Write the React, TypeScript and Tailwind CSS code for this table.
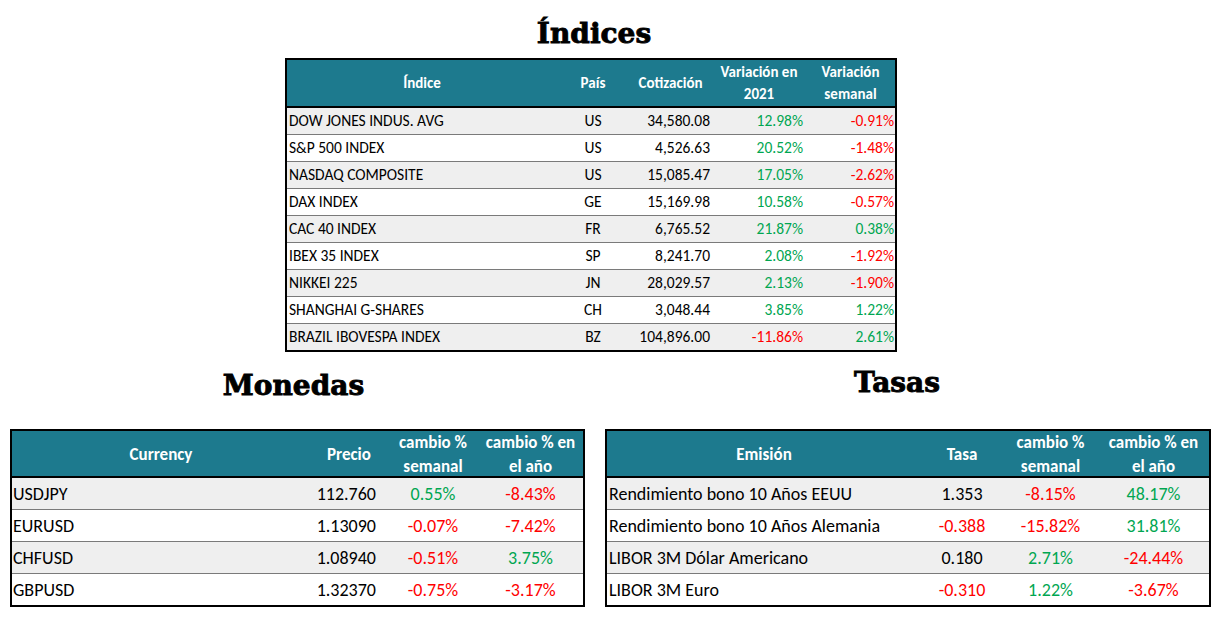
import React from "react"

const GREEN = "text-[#00a651]"
const RED = "text-[#ff0000]"

const body = { fontFamily: "Carlito, Lato, 'Open Sans', sans-serif" }
const titleFont = { fontFamily: "'DejaVu Serif', 'Liberation Serif', serif" }

type Cell = { v: string; c?: "g" | "r" }

const tone = (c?: "g" | "r") => (c === "g" ? GREEN : c === "r" ? RED : "text-black")

const indices: [string, string, string, Cell, Cell][] = [
  ["DOW JONES INDUS. AVG", "US", "34,580.08", { v: "12.98%", c: "g" }, { v: "-0.91%", c: "r" }],
  ["S&P 500 INDEX", "US", "4,526.63", { v: "20.52%", c: "g" }, { v: "-1.48%", c: "r" }],
  ["NASDAQ COMPOSITE", "US", "15,085.47", { v: "17.05%", c: "g" }, { v: "-2.62%", c: "r" }],
  ["DAX INDEX", "GE", "15,169.98", { v: "10.58%", c: "g" }, { v: "-0.57%", c: "r" }],
  ["CAC 40 INDEX", "FR", "6,765.52", { v: "21.87%", c: "g" }, { v: "0.38%", c: "g" }],
  ["IBEX 35 INDEX", "SP", "8,241.70", { v: "2.08%", c: "g" }, { v: "-1.92%", c: "r" }],
  ["NIKKEI 225", "JN", "28,029.57", { v: "2.13%", c: "g" }, { v: "-1.90%", c: "r" }],
  ["SHANGHAI G-SHARES", "CH", "3,048.44", { v: "3.85%", c: "g" }, { v: "1.22%", c: "g" }],
  ["BRAZIL IBOVESPA INDEX", "BZ", "104,896.00", { v: "-11.86%", c: "r" }, { v: "2.61%", c: "g" }],
]

const monedas: [string, string, Cell, Cell][] = [
  ["USDJPY", "112.760", { v: "0.55%", c: "g" }, { v: "-8.43%", c: "r" }],
  ["EURUSD", "1.13090", { v: "-0.07%", c: "r" }, { v: "-7.42%", c: "r" }],
  ["CHFUSD", "1.08940", { v: "-0.51%", c: "r" }, { v: "3.75%", c: "g" }],
  ["GBPUSD", "1.32370", { v: "-0.75%", c: "r" }, { v: "-3.17%", c: "r" }],
]

const tasas: [string, Cell, Cell, Cell][] = [
  ["Rendimiento bono 10 Años EEUU", { v: "1.353" }, { v: "-8.15%", c: "r" }, { v: "48.17%", c: "g" }],
  ["Rendimiento bono 10 Años Alemania", { v: "-0.388", c: "r" }, { v: "-15.82%", c: "r" }, { v: "31.81%", c: "g" }],
  ["LIBOR 3M Dólar Americano", { v: "0.180" }, { v: "2.71%", c: "g" }, { v: "-24.44%", c: "r" }],
  ["LIBOR 3M Euro", { v: "-0.310", c: "r" }, { v: "1.22%", c: "g" }, { v: "-3.67%", c: "r" }],
]

function Title({ children, className = "" }: { children: React.ReactNode; className?: string }) {
  return (
    <h2
      style={titleFont}
      className={`text-center font-black text-black [-webkit-text-stroke:0.9px_black] ${className}`}
    >
      {children}
    </h2>
  )
}

const rowBg = (i: number) => (i % 2 === 0 ? "bg-[#efefef]" : "bg-white")

function IndicesTable() {
  const cols = "grid-cols-[270px_72px_83px_94px_89px]"
  return (
    <div style={body} className="w-[612px] border-2 border-black text-[15.5px] leading-none">
      <div className={`grid h-[48px] ${cols} items-center border-b-2 border-black bg-[#1d7a8e] text-center text-[15px] font-bold leading-[22px] text-white`}>
        <div>Índice</div>
        <div>País</div>
        <div>Cotización</div>
        <div>Variación en<br />2021</div>
        <div>Variación<br />semanal</div>
      </div>
      {indices.map((r, i) => (
        <div
          key={r[0]}
          className={`grid h-[27px] ${cols} items-center last:h-[26px] ${
            i < indices.length - 1 ? "border-b border-[#7a7a7a]" : ""
          } ${rowBg(i)}`}
        >
          <div className="pl-[2px]">{r[0]}</div>
          <div className="text-center">{r[1]}</div>
          <div className="pr-[2px] text-right">{r[2]}</div>
          <div className={`pr-[3px] text-right ${tone(r[3].c)}`}>{r[3].v}</div>
          <div className={`pr-px text-right ${tone(r[4].c)}`}>{r[4].v}</div>
        </div>
      ))}
    </div>
  )
}

function MonedasTable() {
  const cols = "grid-cols-[298px_78px_90px_105px]"
  return (
    <div style={body} className="w-[575px] border-2 border-black text-[18px] leading-none">
      <div className={`grid h-[47px] ${cols} items-center border-b-2 border-black bg-[#1d7a8e] text-center text-[17px] font-bold leading-[24px] text-white`}>
        <div>Currency</div>
        <div>Precio</div>
        <div>cambio %<br />semanal</div>
        <div>cambio % en<br />el año</div>
      </div>
      {monedas.map((r, i) => (
        <div
          key={r[0]}
          className={`grid h-[32px] ${cols} items-center last:h-[31px] ${
            i < monedas.length - 1 ? "border-b border-[#7a7a7a]" : ""
          } ${rowBg(i)}`}
        >
          <div className="pl-px">{r[0]}</div>
          <div className="pr-[12px] text-right">{r[1]}</div>
          <div className={`text-center ${tone(r[2].c)}`}>{r[2].v}</div>
          <div className={`text-center ${tone(r[3].c)}`}>{r[3].v}</div>
        </div>
      ))}
    </div>
  )
}

function TasasTable() {
  const cols = "grid-cols-[314px_82px_95px_111px]"
  return (
    <div style={body} className="w-[606px] border-2 border-black text-[18px] leading-none">
      <div className={`grid h-[47px] ${cols} items-center border-b-2 border-black bg-[#1d7a8e] text-center text-[17px] font-bold leading-[24px] text-white`}>
        <div>Emisión</div>
        <div>Tasa</div>
        <div>cambio %<br />semanal</div>
        <div>cambio % en<br />el año</div>
      </div>
      {tasas.map((r, i) => (
        <div
          key={r[0]}
          className={`grid h-[32px] ${cols} items-center last:h-[31px] ${
            i < tasas.length - 1 ? "border-b border-[#7a7a7a]" : ""
          } ${rowBg(i)}`}
        >
          <div className="whitespace-nowrap pl-[2px]">{r[0]}</div>
          <div className={`text-center ${tone(r[1].c)}`}>{r[1].v}</div>
          <div className={`text-center ${tone(r[2].c)}`}>{r[2].v}</div>
          <div className={`text-center ${tone(r[3].c)}`}>{r[3].v}</div>
        </div>
      ))}
    </div>
  )
}

export default function App() {
  return (
    <div className="h-[622px] w-[1226px] overflow-hidden bg-white">
      <div className="pl-[285px]">
        <div className="w-[612px]">
          <Title className="h-[58px] pt-[17px] pl-[6px] text-[28px] leading-[34px]">Índices</Title>
          <IndicesTable />
        </div>
      </div>
      <div className="mt-[14px] flex">
        <div className="ml-[10px] w-[575px]">
          <Title className="h-[63px] pt-[3px] pr-[8px] text-[28px] leading-[34px]">Monedas</Title>
          <MonedasTable />
        </div>
        <div className="ml-[20px] w-[606px]">
          <Title className="h-[63px] pr-[22px] text-[28px] leading-[34px]">Tasas</Title>
          <TasasTable />
        </div>
      </div>
    </div>
  )
}
